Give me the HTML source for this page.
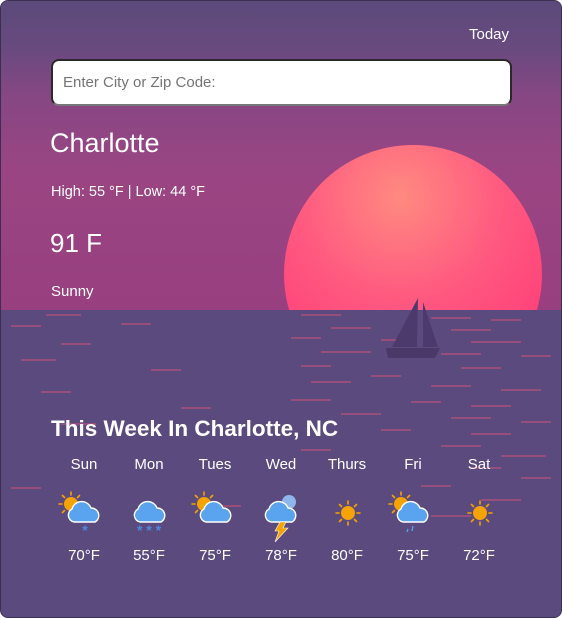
<!DOCTYPE html>
<html><head><style>
html,body{margin:0;padding:0;background:#fff;width:562px;height:618px;overflow:hidden}
.card{position:absolute;left:0;top:0;width:560px;height:616px;border:1px solid #3a2f50;border-radius:8px;overflow:hidden;background:#5b4a7d;font-family:"Segoe UI","Liberation Sans",sans-serif;color:#fff}
.sky{position:absolute;left:0;top:0;width:560px;height:309px;background:linear-gradient(180deg,#5c4a7b 0%,#684a7f 15%,#854783 30%,#9a4583 55%,#983f7f 100%)}
.sun{position:absolute;left:283px;top:144px;width:258px;height:258px;border-radius:50%;background:radial-gradient(circle at 45% 20%,#ff8a80 0%,#ff5a80 40%,#ff3c78 80%)}
.water{position:absolute;left:0;top:309px;width:560px;height:310px;background:#5b4a7d}
.t{position:absolute;white-space:nowrap}
input{position:absolute;left:50px;top:58px;width:461px;height:47px;box-sizing:border-box;border:2px solid #2a2a2a;border-bottom-color:#777;border-radius:8px;background:#fff;font-size:15px;padding:0 10px;font-family:inherit;color:#666}
.d{position:absolute;width:60px;text-align:center;font-size:15px}
svg{overflow:visible}
</style></head><body>
<div class="card">
<div class="sky"></div>
<div class="sun"></div>
<div class="water"></div>
<svg style="position:absolute;left:0;top:309px" width="560" height="240">
<g stroke="#c4527e" stroke-width="1.5" opacity=".75">
<line x1="45" y1="5" x2="80" y2="5"/><line x1="300" y1="5" x2="340" y2="5"/><line x1="430" y1="8" x2="470" y2="8"/><line x1="490" y1="10" x2="520" y2="10"/>
<line x1="10" y1="16" x2="40" y2="16"/><line x1="120" y1="14" x2="150" y2="14"/><line x1="330" y1="18" x2="370" y2="18"/><line x1="450" y1="20" x2="490" y2="20"/>
<line x1="290" y1="28" x2="320" y2="28"/><line x1="380" y1="30" x2="410" y2="30"/><line x1="470" y1="32" x2="520" y2="32"/><line x1="60" y1="34" x2="90" y2="34"/>
<line x1="320" y1="42" x2="370" y2="42"/><line x1="440" y1="44" x2="480" y2="44"/><line x1="520" y1="46" x2="550" y2="46"/><line x1="20" y1="50" x2="55" y2="50"/>
<line x1="300" y1="56" x2="330" y2="56"/><line x1="460" y1="58" x2="500" y2="58"/><line x1="150" y1="60" x2="180" y2="60"/><line x1="370" y1="66" x2="400" y2="66"/>
<line x1="310" y1="72" x2="350" y2="72"/><line x1="430" y1="76" x2="470" y2="76"/><line x1="500" y1="80" x2="540" y2="80"/><line x1="40" y1="82" x2="70" y2="82"/>
<line x1="290" y1="90" x2="330" y2="90"/><line x1="410" y1="92" x2="440" y2="92"/><line x1="470" y1="96" x2="510" y2="96"/><line x1="180" y1="98" x2="210" y2="98"/>
<line x1="340" y1="104" x2="380" y2="104"/><line x1="450" y1="108" x2="490" y2="108"/><line x1="520" y1="112" x2="550" y2="112"/><line x1="60" y1="114" x2="95" y2="114"/>
<line x1="380" y1="120" x2="410" y2="120"/><line x1="470" y1="124" x2="510" y2="124"/><line x1="440" y1="136" x2="480" y2="136"/><line x1="300" y1="140" x2="330" y2="140"/>
<line x1="500" y1="146" x2="545" y2="146"/><line x1="470" y1="158" x2="500" y2="158"/><line x1="520" y1="168" x2="550" y2="168"/><line x1="420" y1="176" x2="450" y2="176"/>
<line x1="10" y1="178" x2="40" y2="178"/><line x1="480" y1="190" x2="520" y2="190"/><line x1="200" y1="196" x2="240" y2="196"/><line x1="430" y1="206" x2="470" y2="206"/>
</g>
<polygon points="417,-12 391,37 416,37" fill="#4d3a6c"/><polygon points="422,-8 422,37 437,37" fill="#4d3a6c"/>
<polygon points="385,38 439,38 434,48 387,48" fill="#4a3868"/>
</svg>
<div class="t" style="left:468px;top:25px;font-size:15px">Today</div>
<input placeholder="Enter City or Zip Code:">
<div class="t" style="left:49px;top:127px;font-size:27px">Charlotte</div>
<div class="t" style="left:50px;top:183px;font-size:14.5px">High: 55 °F | Low: 44 °F</div>
<div class="t" style="left:49px;top:227px;font-size:26px">91 F</div>
<div class="t" style="left:50px;top:282px;font-size:15px">Sunny</div>
<div class="t" style="left:50px;top:415px;font-size:22.5px;font-weight:bold">This Week In Charlotte, NC</div>
<div class="d" style="left:53px;top:455px">Sun</div><div class="d" style="left:118px;top:455px">Mon</div><div class="d" style="left:184px;top:455px">Tues</div><div class="d" style="left:250px;top:455px">Wed</div><div class="d" style="left:316px;top:455px">Thurs</div><div class="d" style="left:382px;top:455px">Fri</div><div class="d" style="left:448px;top:455px">Sat</div>
<div class="d" style="left:53px;top:546px">70°F</div><div class="d" style="left:118px;top:546px">55°F</div><div class="d" style="left:184px;top:546px">75°F</div><div class="d" style="left:250px;top:546px">78°F</div><div class="d" style="left:316px;top:546px">80°F</div><div class="d" style="left:382px;top:546px">75°F</div><div class="d" style="left:448px;top:546px">72°F</div>
<svg style="position:absolute;left:0;top:485px" width="560" height="60">
<defs>
<g id="sn"><g stroke="#f5a300" stroke-width="1.6" stroke-linecap="round"><line x1="0" y1="-9" x2="0" y2="-12"/><line x1="0" y1="9" x2="0" y2="12"/><line x1="-9" y1="0" x2="-12" y2="0"/><line x1="9" y1="0" x2="12" y2="0"/><line x1="6.5" y1="6.5" x2="8.5" y2="8.5"/><line x1="-6.5" y1="-6.5" x2="-8.5" y2="-8.5"/><line x1="6.5" y1="-6.5" x2="8.5" y2="-8.5"/><line x1="-6.5" y1="6.5" x2="-8.5" y2="8.5"/></g><circle r="7" fill="#f5a300"/></g>
<path id="cl" d="M-11,11 a7,7 0 0 1 -2,-13 a10,10 0 0 1 19,-1 a7.5,7.5 0 0 1 4,14 z" fill="#5aa3ee" stroke="#fff" stroke-width="1.4"/>
</defs>
<use href="#sn" x="70" y="18"/><use href="#cl" x="84" y="25"/><text x="84" y="49" fill="#4a8ae0" font-size="14" font-weight="bold" text-anchor="middle">*</text>
<use href="#cl" x="150" y="25"/><text x="148" y="49" fill="#4a8ae0" font-size="14" font-weight="bold" text-anchor="middle">* * *</text>
<use href="#sn" x="203" y="18"/><use href="#cl" x="216" y="25"/>
<circle cx="288" cy="16" r="7" fill="#8fb6ea"/><use href="#cl" x="281" y="25"/><polygon points="279,36 285,36 282,42 287,42 274,56 278,45 274,45" fill="#f5a300" stroke="#fff" stroke-width=".6"/>
<use href="#sn" x="347" y="27"/>
<use href="#sn" x="400" y="18"/><use href="#cl" x="413" y="25"/><line x1="407" y1="43" x2="406" y2="46" stroke="#5aa3ee" stroke-width="1.3"/><line x1="412" y1="40" x2="411" y2="45" stroke="#5aa3ee" stroke-width="1.3"/>
<use href="#sn" x="479" y="27"/>
</svg>
</div>
</body></html>
